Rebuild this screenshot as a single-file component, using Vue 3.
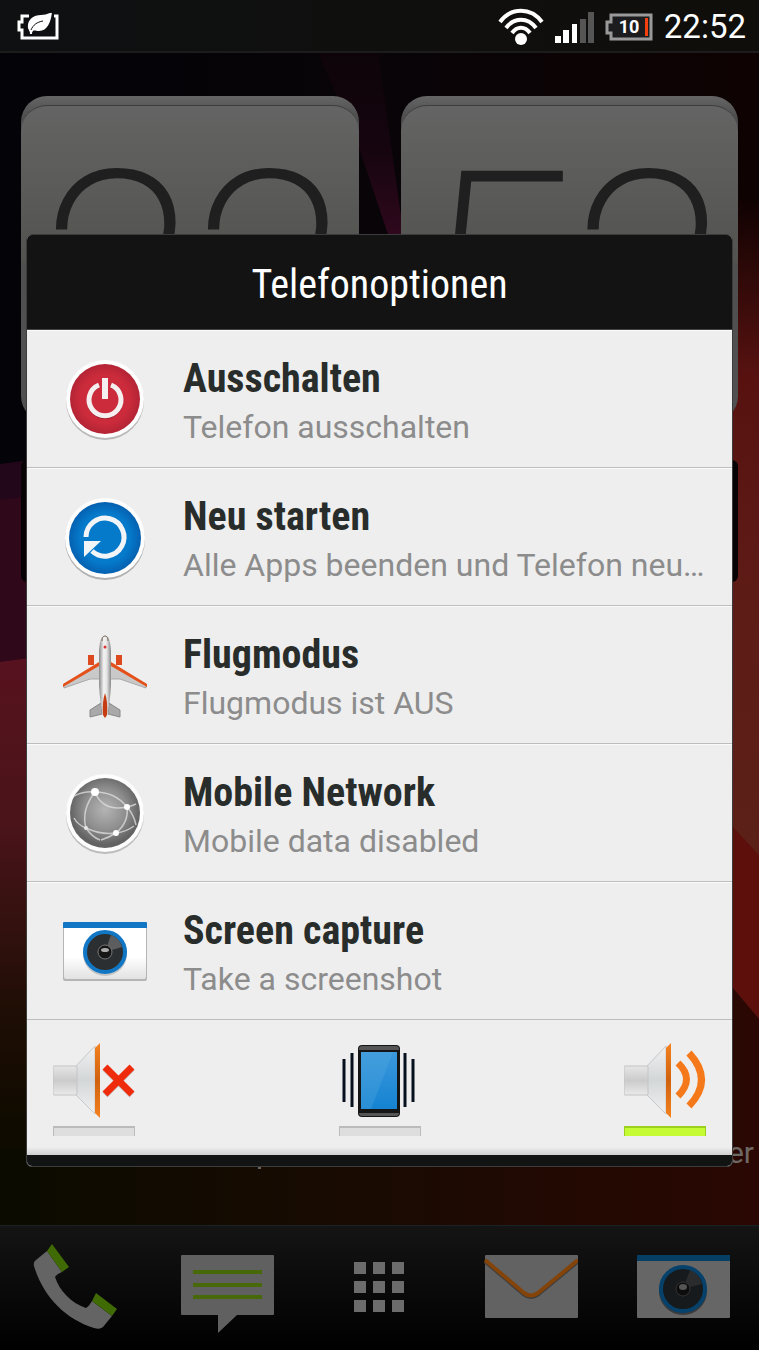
<script setup>
import {ref} from 'vue'

const options = [
  {id: 'power', title: 'Ausschalten', text: 'Telefon ausschalten'},
  {id: 'restart', title: 'Neu starten', text: 'Alle Apps beenden und Telefon neu starten'},
  {id: 'flight', title: 'Flugmodus', text: 'Flugmodus ist AUS'},
  {id: 'network', title: 'Mobile Network', text: 'Mobile data disabled'},
  {id: 'capture', title: 'Screen capture', text: 'Take a screenshot'},
]
const modes = ['mute', 'vibrate', 'sound']
const mode = ref('sound')
const apps = ['phone', 'messages', 'apps', 'mail', 'camera']
const clock = ['22', '52']
const grid = [22, 41, 60]
</script>

<template>
  <div class="screen">
    <svg class="wallpaper" viewBox="0 0 759 1350" preserveAspectRatio="none" aria-hidden="true">
      <defs>
        <linearGradient id="wp-base" x1="0" x2="1" y1="0" y2="0">
          <stop offset="0" stop-color="#040308"/>
          <stop offset=".5" stop-color="#080407"/>
          <stop offset="1" stop-color="#0e0202"/>
        </linearGradient>
        <linearGradient id="wp-left" x1="0" x2="0" y1="0" y2="1">
          <stop offset="0" stop-color="#58121f"/>
          <stop offset=".3" stop-color="#4a141a"/>
          <stop offset=".6" stop-color="#200e05"/>
          <stop offset=".8" stop-color="#0f0b00"/>
          <stop offset="1" stop-color="#0b0b00"/>
        </linearGradient>
        <linearGradient id="wp-right" x1="0" x2="0" y1="0" y2="1">
          <stop offset="0" stop-color="#100202"/>
          <stop offset=".25" stop-color="#571210"/>
          <stop offset=".6" stop-color="#5e1c17"/>
          <stop offset="1" stop-color="#5a2117"/>
        </linearGradient>
        <linearGradient id="wp-bottom" x1="0" x2="1" y1="0" y2="0">
          <stop offset="0" stop-color="#0b0b00"/>
          <stop offset=".5" stop-color="#1a0b02"/>
          <stop offset="1" stop-color="#2a0702"/>
        </linearGradient>
        <linearGradient id="wp-beam" x1="0" x2="0" y1="0" y2="1">
          <stop offset="0" stop-color="#0d0409"/>
          <stop offset=".5" stop-color="#16050f"/>
          <stop offset="1" stop-color="#340920"/>
        </linearGradient>

        <!-- shared by the icons -->
        <radialGradient id="red"><stop offset=".7" stop-color="#cb2b3b"/><stop offset="1" stop-color="#b32435"/></radialGradient>
        <radialGradient id="blue"><stop offset=".7" stop-color="#0579ca"/><stop offset="1" stop-color="#0560b0"/></radialGradient>
        <radialGradient id="globe" cy=".45"><stop offset="0" stop-color="#b4b4b4"/><stop offset=".6" stop-color="#8e8e8e"/><stop offset="1" stop-color="#636363"/></radialGradient>
        <linearGradient id="hull"><stop offset="0" stop-color="#888"/><stop offset=".4" stop-color="#f4f4f4"/><stop offset=".65" stop-color="#e4e4e4"/><stop offset="1" stop-color="#888"/></linearGradient>
        <linearGradient id="case" x2="0" y2="1"><stop offset=".6" stop-color="#fff"/><stop offset="1" stop-color="#e2e2e2"/></linearGradient>
        <linearGradient id="box" x2="0" y2="1"><stop offset="0" stop-color="#e6e6e6"/><stop offset=".5" stop-color="#cbcbcb"/><stop offset="1" stop-color="#e9e9e9"/></linearGradient>
        <linearGradient id="cone" x2="0" y2="1"><stop offset="0" stop-color="#f1f1f1"/><stop offset=".5" stop-color="#d3d6d8"/><stop offset="1" stop-color="#f1f1f1"/></linearGradient>
        <linearGradient id="rim" x2="0" y2="1"><stop offset="0" stop-color="#f5821f"/><stop offset=".5" stop-color="#d0620f"/><stop offset="1" stop-color="#f5821f"/></linearGradient>
        <linearGradient id="glass" x2="0" y2="1"><stop offset="0" stop-color="#3b98db"/><stop offset="1" stop-color="#1583d2"/></linearGradient>
      </defs>
      <rect width="759" height="1350" fill="url(#wp-base)"/>
      <path d="M318 52h60l28 200h-12L358 145z" fill="url(#wp-beam)"/>
      <path d="M0 464l120-16v220H0z" fill="#22071a"/>
      <path d="M0 500l120-16v260H0z" fill="#2f0819"/>
      <path d="M0 662l120-16v600H0z" fill="url(#wp-left)"/>
      <path d="M600 200h159v700H600z" fill="url(#wp-right)"/>
      <path d="M600 684l159 171v300H600z" fill="#5c0f0b"/>
      <path d="M0 1150L600 1150V830l159 189v331H0z" fill="url(#wp-bottom)"/>
    </svg>

    <header class="status">
      <svg width="42" height="28" viewBox="0 0 42 28" role="img" aria-label="Energiesparmodus">
        <path d="M12 3H5v6H2v8h3v8h35V3h-3" fill="none" stroke="#fff" stroke-width="3"/>
        <path d="M13 21c0-3-1-3-2-6C10 7 16 2 24 2c4 0 7-1 11-3-1 9-4 19-13 19-3 0-5-1-6 0-1 1-1 2-1 3z" fill="#fff"/>
        <path d="M14 17c2-5 6-8 12-9" fill="none" stroke="#111" stroke-width="1"/>
      </svg>
      <div class="status__right">
        <svg width="46" height="38" viewBox="0 0 46 38" role="img" aria-label="WLAN">
          <g fill="none" stroke="#fff" stroke-width="4">
            <path d="M2 14C13-1 33-1 44 14"/>
            <path d="M8 20c8-11 22-11 30 0"/>
            <path d="M14 25c5-7 13-7 18 0"/>
          </g>
          <circle cx="23" cy="31" r="6" fill="#fff"/>
        </svg>
        <svg width="39" height="31" viewBox="0 0 39 31" role="img" aria-label="Signal">
          <path d="M0 24h6v7H0zM8 18h6v13H8zM17 12h5v19h-5z" fill="#fff"/>
          <path d="M25 7h6v24h-6zM33 0h6v31h-6z" fill="#555"/>
        </svg>
        <svg width="48" height="28" viewBox="0 0 48 28" role="img" aria-label="Akku">
          <path d="M6 2H46V26H6V20H2V9H6z" fill="#1c1c1e" stroke="#999" stroke-width="3"/>
          <rect x="40" y="5" width="3" height="18" fill="#f4400e"/>
          <text class="level" x="24" y="20" text-anchor="middle">10</text>
        </svg>
        <time class="time">22:52</time>
      </div>
    </header>

    <main class="home">
      <div class="clock">
        <div v-for="part in clock" :key="part" class="clock__card">
          <div class="clock__flap">
            <span v-for="(digit, index) in part" :key="index">{{ digit }}</span>
          </div>
        </div>
      </div>
      <div class="widget"></div>
      <div class="labels">
        <span>p</span>
        <span>er</span>
      </div>
    </main>

    <nav class="dock">
      <button v-for="app in apps" :key="app" class="dock__item" :aria-label="app">
        <svg width="94" height="96" viewBox="0 0 94 96" aria-hidden="true">
          <g v-if="app === 'phone'">
            <path d="M18 11L33 32C29 34 27 35 26 37C30 50 42 63 57 68C60 66 61 64 63 61L83 76L74 87Q71 90 65 88C36 79 14 56 5 26Q4 22 7 20z" fill="#646464"/>
            <path d="M18 11l5-7 17 23-7 5zM63 61l4-8 21 16-5 7z" fill="#3f6a04"/>
          </g>
          <g v-else-if="app === 'messages'">
            <path d="M1 15h91q1 0 1 1v58q0 1-1 1H56L37 93V75H1q-1 0-1-1V16q0-1 1-1z" fill="#606060"/>
            <path d="M12 32h69M12 45h69M12 57h69" stroke="#47690a" stroke-width="4"/>
          </g>
          <g v-else-if="app === 'apps'" fill="#6c6c6c">
            <template v-for="y in grid" :key="y">
              <rect v-for="x in grid" :key="x" :x="x" :y="y" width="12" height="12"/>
            </template>
          </g>
          <g v-else-if="app === 'mail'">
            <rect x="1" y="15" width="93" height="63" rx="1" fill="#626262"/>
            <path d="M1 22L40 55q7 5 14 0L94 22" fill="none" stroke="#3d3d3d" stroke-width="3"/>
            <path d="M1 20L40 53q7 5 14 0L94 20" fill="none" stroke="#844309" stroke-width="4"/>
          </g>
          <g v-else>
            <rect x="1" y="15" width="93" height="63" rx="1" fill="#666"/>
            <rect x="1" y="15" width="93" height="6" fill="#053f66"/>
            <circle cx="47" cy="51" r="24" fill="#3b3b3b"/>
            <circle cx="47" cy="49" r="22" fill="#171a1c" stroke="#05416a" stroke-width="4"/>
            <path d="M47 49l7-19a20 20 0 0 1 12 14z" fill="#292b2c"/>
            <circle cx="47" cy="49" r="7" fill="#0d0d0d" stroke="#333" stroke-width="1"/>
            <ellipse cx="47" cy="47" rx="4" ry="3" fill="#555"/>
          </g>
        </svg>
      </button>
    </nav>

    <div class="overlay">
      <section class="dialog" role="dialog" aria-labelledby="dialog-title">
        <h1 id="dialog-title" class="dialog__title">Telefonoptionen</h1>
        <ul class="options">
          <li v-for="option in options" :key="option.id">
            <button class="option">
              <svg class="option__icon" width="86" height="86" viewBox="0 0 86 86" aria-hidden="true">
                <g v-if="option.id === 'power'">
                  <circle cx="43" cy="44" r="39" fill="#b9b9b9"/>
                  <circle cx="43" cy="42" r="39" fill="#fdfdfd"/>
                  <circle cx="43" cy="42" r="35" fill="url(#red)"/>
                  <path d="M37 29a16 16 0 1 0 12 0" fill="none" stroke="#8f1c29" stroke-width="4"/>
                  <path d="M37 28a16 16 0 1 0 12 0" fill="none" stroke="#f6eff0" stroke-width="5"/>
                  <path d="M43 21v21" stroke="#f6eff0" stroke-width="6"/>
                </g>
                <g v-else-if="option.id === 'restart'">
                  <circle cx="43" cy="45" r="40" fill="#b0b0b0"/>
                  <circle cx="43" cy="43" r="40" fill="#fdfdfd"/>
                  <circle cx="43" cy="43" r="36" fill="url(#blue)"/>
                  <path d="M24 42A19 19 0 1 1 30 56" fill="none" stroke="#f1f5f8" stroke-width="5"/>
                  <path d="M22 46h17L22 62z" fill="#f1f5f8"/>
                </g>
                <g v-else-if="option.id === 'flight'">
                  <path d="M39 30L2 51v4l26-9h11zM47 30l37 21v4l-26-9H47z" fill="#c9c9c9" stroke="#a9a9a9" stroke-width="1"/>
                  <path d="M37 29L1 51v3l36-21zM49 29l36 22v3L49 33z" fill="#e4511b"/>
                  <path d="M26 22h6v10h-6zM54 22h6v10h-6z" fill="#dd4a1f"/>
                  <path d="M39 70l-11 7v7l12-3zM47 70l11 7v7l-12-3z" fill="#a9a9a9" stroke="#888" stroke-width="1"/>
                  <path d="M37 18Q38 2 43 2T49 18V52Q48 70 45 84h-4Q38 70 37 52z" fill="url(#hull)"/>
                  <path d="M40 8q0-5 3-5t3 5" fill="none" stroke="#776655" stroke-width="1"/>
                  <circle cx="43" cy="14" r="1.500" fill="#d33"/>
                  <path d="M43 60q3 9 2 22l-2 3-2-3q-1-13 2-22z" fill="#c53c12"/>
                </g>
                <g v-else-if="option.id === 'network'">
                  <circle cx="43" cy="44" r="39" fill="#bcbcbc"/>
                  <circle cx="43" cy="42" r="39" fill="#fdfdfd"/>
                  <circle cx="43" cy="42" r="35" fill="url(#globe)"/>
                  <g fill="none" stroke="#dcdcdc" stroke-width="1.500" opacity=".8">
                    <path d="M33 21q-14 18-9 36M33 21q20 0 32 15M33 21q8 20 32 15M65 36q2 15-11 26M24 57q15 7 30 5M12 47q4 7 12 10 6 9 14 12M54 62q10-1 18-7M54 62q-8 5-15 7M65 36q7 8 9 18M65 36q5-1 9-3M12 25q10-5 21-4"/>
                  </g>
                  <circle cx="33" cy="21" r="4" fill="#fff"/>
                  <circle cx="65" cy="36" r="3" fill="#fff"/>
                  <circle cx="54" cy="62" r="3" fill="#fff"/>
                  <circle cx="24" cy="57" r="2" fill="#e5e5e5"/>
                </g>
                <g v-else>
                  <rect x="1" y="14" width="84" height="58" rx="2" fill="#b5b5b5"/>
                  <rect x="2" y="14" width="82" height="56" rx="2" fill="url(#case)"/>
                  <path d="M1 19v-5q0-1 1-1h82q1 0 1 1v5z" fill="#1177c5"/>
                  <circle cx="43" cy="45" r="22" fill="#c4c4c4"/>
                  <circle cx="43" cy="43" r="20" fill="#2c2f31" stroke="#1177c5" stroke-width="4"/>
                  <path d="M43 43l6-17a18 18 0 0 1 11 12z" fill="#5b5d5e"/>
                  <circle cx="43" cy="43" r="7" fill="#161616" stroke="#777" stroke-width="1"/>
                  <ellipse cx="43" cy="41" rx="4" ry="2" fill="#aaa"/>
                </g>
              </svg>
              <span class="option__body">
                <strong class="option__title">{{ option.title }}</strong>
                <span class="option__text">{{ option.text }}</span>
              </span>
            </button>
          </li>
        </ul>
        <div class="modes" role="radiogroup" aria-label="Klingelmodus">
          <label v-for="item in modes" :key="item" class="mode">
            <input v-model="mode" class="mode__input" type="radio" name="mode" :value="item" :aria-label="item">
            <svg width="82" height="77" viewBox="0 0 82 77" aria-hidden="true">
              <g v-if="item === 'vibrate'">
                <path d="M5 16v43M13 10v54M66 10v54M74 16v43" stroke="#06101f" stroke-width="3"/>
                <rect x="19" y="2" width="42" height="72" rx="4" fill="#151515"/>
                <path d="M20 6q0-3 3-3h34q3 0 3 3v1H20zM20 70h40q0 3-3 3H23q-3 0-3-3z" fill="#555"/>
                <rect x="22" y="9" width="36" height="57" fill="url(#glass)"/>
                <path d="M22 9h32L32 66H22z" fill="#5aabe2" opacity=".3"/>
              </g>
              <g v-else>
                <path d="M42 3v68L23 52V23z" fill="url(#cone)" stroke="#c8c8c8" stroke-width="1"/>
                <rect x="0" y="23" width="24" height="29" rx="1" fill="url(#box)" stroke="#c4c4c4" stroke-width="1"/>
                <path d="M42 5l5-5v75l-5-5z" fill="url(#rim)"/>
                <g v-if="item === 'mute'" stroke-width="7">
                  <path d="M52 25l27 27M79 25L52 52" stroke="#c4c4c4"/>
                  <path d="M52 24l27 27M79 24L52 51" stroke="#ee2b0b"/>
                </g>
                <g v-else fill="none" stroke="#f5791a" stroke-width="7">
                  <path d="M54 20q17 16 0 33"/>
                  <path d="M65 10q25 27 0 53"/>
                </g>
              </g>
            </svg>
            <span class="mode__bar"></span>
          </label>
        </div>
        <div class="dialog__foot"></div>
      </section>
    </div>
  </div>
</template>

<style>
body {
  background: #040308;
}
</style>

<style scoped>
.screen {
  position: relative;
  display: flex;
  flex-direction: column;
  min-height: 100vh;
  overflow: hidden;
  font-family: Roboto, "Liberation Sans", sans-serif;
}

.screen * {
  box-sizing: border-box;
}

.wallpaper {
  position: absolute;
  inset: 0;
  width: 100%;
  height: 100%;
}

button {
  border: 0;
  padding: 0;
  background: none;
  font-family: inherit;
  cursor: pointer;
}

.status {
  position: relative;
  display: flex;
  align-items: center;
  justify-content: space-between;
  height: 53px;
  padding: 3px 13px 0 17px;
  background: linear-gradient(90deg, #0e1011, #100e0b);
  border-bottom: 2px solid #1c1c1c;
}

.status__right {
  display: flex;
  align-items: center;
  gap: 11px;
}

.level {
  fill: #fff;
  font-size: 18px;
  font-weight: 700;
}

.time {
  color: #fff;
  font-size: 33px;
  line-height: 40px;
}

.home {
  position: relative;
  flex: 1;
  display: flex;
  flex-direction: column;
  padding: 43px 0 54px;
}

.clock {
  display: grid;
  grid-template-columns: 1fr 1fr;
  gap: 42px;
  padding: 0 21px;
}

.clock__card {
  height: 326px;
  padding-top: 9px;
  border-radius: 26px;
  background: linear-gradient(#656565, #4f4f4f 20px, #505050);
}

.clock__flap {
  display: grid;
  grid-template-columns: 152px 152px;
  justify-content: center;
  justify-items: center;
  height: 158px;
  padding-left: 12px;
  overflow: hidden;
  border-top: 1px solid #3e3e3e;
  border-radius: 26px 26px 0 0;
  background: linear-gradient(#646464, #52524f);
  color: #1f1f1f;
  font-size: 290px;
  font-weight: 200;
  line-height: 344px;
}

.widget {
  height: 122px;
  margin: 38px 21px 0;
  border-radius: 6px;
  background: #070305;
}

.labels {
  display: flex;
  justify-content: space-between;
  margin-top: auto;
  padding: 0 5px 0 256px;
  color: #6e6865;
  font-size: 30px;
  line-height: 36px;
}

.dock {
  position: relative;
  display: grid;
  grid-template-columns: repeat(5, 1fr);
  height: 125px;
  border-top: 1px solid #1b2226;
  background: linear-gradient(#141414, #000);
}

.dock__item {
  display: flex;
  justify-content: center;
  padding-top: 14px;
}

.overlay {
  position: absolute;
  inset: 0;
  display: flex;
  align-items: center;
  padding: 51px 26px 0;
}

.dialog {
  flex: 1;
  min-width: 0;
  border: 1px solid #3c3c3c;
  border-radius: 6px;
  overflow: hidden;
  background: #eee;
}

.dialog__title {
  margin: 0;
  padding: 26px 0 20px;
  border-bottom: 1px solid #444;
  background: #131313;
  color: #fff;
  font-family: "Roboto Condensed", Roboto, sans-serif;
  font-size: 40px;
  font-weight: 400;
  line-height: 48px;
  text-align: center;
}

.options {
  margin: 0;
  padding: 0;
  list-style: none;
}

.option {
  display: flex;
  align-items: center;
  gap: 35px;
  width: 100%;
  height: 138px;
  padding: 0 24px 0 35px;
  border-top: 1px solid #fafafa;
  border-bottom: 1px solid #bdbdbd;
  text-align: left;
}

.option__icon {
  flex: none;
  margin-top: 2px;
}

.option__body {
  display: flex;
  flex-direction: column;
  flex: 1;
  min-width: 0;
  padding-top: 8px;
}

.option__title {
  color: #282d2b;
  font-family: "Roboto Condensed", Roboto, sans-serif;
  font-size: 40px;
  font-weight: 700;
  line-height: 48px;
}

.option__text {
  overflow: hidden;
  color: #8c8c8c;
  font-size: 32px;
  line-height: 48px;
  text-overflow: ellipsis;
  white-space: nowrap;
}

.modes {
  display: flex;
  justify-content: space-between;
  padding: 23px 26px 19px;
  background: linear-gradient(#eee 94%, #d0d0d0);
}

.mode {
  position: relative;
  display: flex;
  flex-direction: column;
  gap: 6px;
  cursor: pointer;
}

.mode__input {
  position: absolute;
  inset: 0;
  margin: 0;
  opacity: 0;
}

.mode__bar {
  height: 10px;
  border: 2px solid #bbb;
  border-width: 2px 1px 0;
  background: #dedede;
}

.mode__input:checked ~ .mode__bar {
  border-color: #9bd01f;
  background: #c4fb33;
}

.dialog__foot {
  height: 11px;
  background: #111413;
}
</style>
